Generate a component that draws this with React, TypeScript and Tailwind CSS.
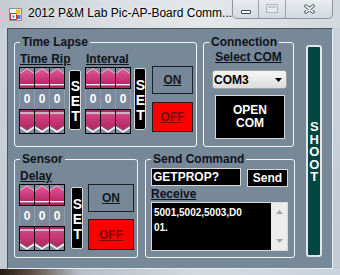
import React from 'react';

const label = 'text-[12px] leading-[14px] font-bold text-[#10131a]';

function Group({
  title,
  className,
  children,
}: {
  title: string;
  className: string;
  children: React.ReactNode;
}) {
  return (
    <fieldset className={`rounded-[3px] border border-[#f3f5f7] ${className}`}>
      <legend className={`ml-[5px] px-[2px] ${label}`}>{title}</legend>
      {children}
    </fieldset>
  );
}

function UpArrow() {
  return (
    <svg width="14" height="20" viewBox="0 0 14 20" className="block bg-[#7f8e9e]">
      <defs>
        <linearGradient id="pkUp" x1="0" y1="0" x2="0" y2="1">
          <stop offset="0" stopColor="#e35a98" />
          <stop offset="1" stopColor="#b8286a" />
        </linearGradient>
      </defs>
      <polygon points="0,5.5 7,0.5 14,5.5 14,16 0,16" fill="url(#pkUp)" />
      <polyline points="0,5.5 7,0.8 14,5.5" fill="none" stroke="#f4b0cc" strokeWidth="1" />
      <rect y="16" width="14" height="1.5" fill="#ffffff" />
      <rect y="17.5" width="14" height="2.5" fill="#b02864" />
    </svg>
  );
}

function DownArrow() {
  return (
    <svg width="14" height="23" viewBox="0 0 14 23" className="block bg-[#7f8e9e]">
      <defs>
        <linearGradient id="pkDown" x1="0" y1="0" x2="0" y2="1">
          <stop offset="0" stopColor="#d24484" />
          <stop offset="1" stopColor="#b0265f" />
        </linearGradient>
      </defs>
      <rect y="0" width="14" height="2.5" fill="#b02864" />
      <rect y="2.5" width="14" height="1.2" fill="#ffffff" />
      <polygon points="0,3.7 14,3.7 14,15.5 7,20 0,15.5" fill="url(#pkDown)" />
      <polyline points="0,17.3 7,21.8 14,17.3" fill="none" stroke="#ffffff" strokeWidth="1.4" />
    </svg>
  );
}

function Spinner() {
  return (
    <div className="flex w-[46px] flex-col">
      <div className="flex h-[22px] gap-px border border-black bg-black">
        <UpArrow />
        <UpArrow />
        <UpArrow />
      </div>
      <div className="flex h-[20px] gap-px bg-[#8f9cab] px-px">
        {[0, 1, 2].map((i) => (
          <div
            key={i}
            className="flex w-[14px] items-center justify-center bg-[#7b8a9a] text-[12px] font-bold text-white"
          >
            0
          </div>
        ))}
      </div>
      <div className="flex h-[25px] gap-px border border-black bg-black">
        <DownArrow />
        <DownArrow />
        <DownArrow />
      </div>
    </div>
  );
}

function SetButton({ className }: { className: string }) {
  return (
    <div
      className={`flex w-[12px] items-center justify-center rounded-[2px] border border-[#d8d8d8] bg-black text-[14px] font-bold text-white ${className}`}
    >
      <span className="[writing-mode:vertical-lr] [text-orientation:upright] tracking-[-1px]">SET</span>
    </div>
  );
}

function OnOff({ w, onH, offH, gap }: { w: string; onH: string; offH: string; gap: string }) {
  return (
    <>
      <div
        className={`flex items-center justify-center border border-[#1b1f26] bg-[#778899] text-[12px] font-bold text-[#141820] underline ${w} ${onH}`}
      >
        ON
      </div>
      <div
        className={`flex items-center justify-center border border-[#2a1a1a] bg-[#ff0000] text-[12px] font-bold text-[#7a0a0a] underline ${w} ${offH} ${gap}`}
      >
        OFF
      </div>
    </>
  );
}

export default function App() {
  return (
    <div className="flex h-[275px] w-[340px] flex-col overflow-hidden bg-[linear-gradient(to_bottom,#cdd3da,#c3cad2)] font-['Liberation_Sans',Arial,sans-serif]">
      {/* title bar */}
      <div className="flex h-[28px] items-start bg-[linear-gradient(to_right,#c5cbd2,#d9dde2_30%,#e4e7ea_60%,#d3d8de)]">
        <svg width="13" height="13" viewBox="0 0 13 13" className="ml-[9px] mt-[8px] shrink-0">
          <rect x="0.5" y="0.5" width="12" height="12" fill="#f4f4f4" stroke="#8090a8" />
          <rect x="1.5" y="5.5" width="6" height="6" fill="#ffffff" stroke="#d83030" />
          <rect x="3.5" y="7.5" width="2" height="2" fill="#2f6fd0" />
          <rect x="7" y="1.5" width="4.5" height="4.5" fill="#f2c21c" />
          <rect x="8" y="7" width="3.5" height="4" fill="#3c78d8" />
        </svg>
        <div className="ml-[6px] mt-[6px] whitespace-nowrap text-[12px] leading-[15px] text-black [text-shadow:0_0_5px_rgba(255,255,255,0.95)]">
          2012 P&amp;M Lab Pic-AP-Board Comm...
        </div>
        <div className="ml-auto mr-[7px] flex h-[19px] shrink-0 rounded-b-[5px] border border-t-0 border-[#8c96a2] bg-[linear-gradient(to_bottom,#e9ecef,#d3d9df)]">
          <div className="flex w-[26px] items-end justify-center border-r border-[#9aa4ae] pb-[4px]">
            <div className="h-[4px] w-[10px] rounded-[1px] border border-[#3e4650] bg-white" />
          </div>
          <div className="flex w-[27px] items-start justify-center border-r border-[#9aa4ae] pt-[4px]">
            <div className="h-[9px] w-[12px] border border-[#aeb6c0] bg-[#e6eaee] p-[1px]">
              <div className="h-full w-full border-t-2 border-[#c2c9d1]" />
            </div>
          </div>
          <div className="flex w-[46px] items-center justify-center pb-[1px]">
            <svg width="11" height="10" viewBox="0 0 11 10">
              <path d="M2 2 L9 8 M9 2 L2 8" stroke="#3c4550" strokeWidth="3.4" strokeLinecap="round" />
              <path d="M2 2 L9 8 M9 2 L2 8" stroke="#f4f6f8" strokeWidth="1.7" strokeLinecap="round" />
            </svg>
          </div>
        </div>
      </div>

      {/* client area */}
      <div className="ml-[7px] h-[241px] w-[326px] border border-t-[#49545f] border-l-[#49545f] border-r-[#e6ecf2] border-b-[#e6ecf2] bg-[#778899]">
        <div className="flex items-start">
          <div className="flex w-[287px] flex-col pl-[6px] pt-[6px]">
            <div className="flex gap-[6px]">
              <Group title="Time Lapse" className="h-[112px] w-[183px]">
                <div className="flex items-start">
                  <div className="ml-[4px] flex w-[46px] flex-col">
                    <div className={`mt-[3px] whitespace-nowrap pl-[1px] underline ${label}`}>Time Rip</div>
                    <div className="mt-[1px]">
                      <Spinner />
                    </div>
                  </div>
                  <SetButton className="ml-[4px] mt-[21px] h-[60px]" />
                  <div className="ml-[4px] flex w-[46px] flex-col">
                    <div className={`mt-[3px] whitespace-nowrap pl-[1px] underline ${label}`}>Interval</div>
                    <div className="mt-[1px]">
                      <Spinner />
                    </div>
                  </div>
                  <SetButton className="ml-[3px] mt-[19px] h-[62px]" />
                  <div className="ml-[6px] mt-[17px] flex flex-col">
                    <OnOff w="w-[41px]" onH="h-[28px]" offH="h-[30px]" gap="mt-[8px]" />
                  </div>
                </div>
              </Group>

              <Group title="Connection" className="h-[112px] w-[91px]">
                <div className="flex flex-col">
                  <div className={`mt-[1px] text-center underline ${label}`}>Select COM</div>
                  <div className="ml-[8px] mt-[6px] flex h-[19px] w-[75px] items-center rounded-[3px] border border-[#9c9c9c] bg-[linear-gradient(to_bottom,#f7f7f7,#dcdcdc)] pl-[1px]">
                    <span className="text-[12px] leading-[14px] font-bold text-black">COM3</span>
                    <svg width="7" height="4" viewBox="0 0 7 4" className="ml-auto mr-[4px]">
                      <polygon points="0,0 7,0 3.5,4" fill="#000" />
                    </svg>
                  </div>
                  <div className="ml-[11px] mt-[6px] flex h-[44px] w-[70px] flex-col items-center justify-center border border-[#d6d6d6] bg-black text-[12px] leading-[13px] font-bold text-white">
                    <span>OPEN</span>
                    <span>COM</span>
                  </div>
                </div>
              </Group>
            </div>

            <div className="mt-[5px] flex gap-[7px]">
              <Group title="Sensor" className="h-[106px] w-[124px]">
                <div className="flex items-start">
                  <div className="ml-[4px] flex w-[46px] flex-col">
                    <div className={`mt-[3px] pl-[1px] underline ${label}`}>Delay</div>
                    <div className="mt-[1px]">
                      <Spinner />
                    </div>
                  </div>
                  <SetButton className="ml-[6px] mt-[21px] h-[62px]" />
                  <div className="ml-[5px] mt-[18px] flex flex-col">
                    <OnOff w="w-[46px]" onH="h-[28px]" offH="h-[31px]" gap="mt-[7px]" />
                  </div>
                </div>
              </Group>

              <Group title="Send Command" className="h-[106px] w-[150px]">
                <div className="flex items-start pl-[5px] pt-[2px]">
                  <div className="flex h-[18px] w-[90px] items-center border border-[#d8d8d8] bg-black pl-[1px] text-[12px] font-bold text-white">
                    GETPROP?
                  </div>
                  <div className="ml-[6px] mt-[1px] flex h-[18px] w-[41px] items-center justify-center border border-[#d8d8d8] bg-black text-[12px] font-bold text-white">
                    Send
                  </div>
                </div>
                <div className={`ml-[5px] underline ${label}`}>Receive</div>
                <div className="ml-[5px] mt-[1px] flex h-[49px] w-[137px] border border-[#d8d8d8] bg-black">
                  <div className="flex-1 pl-[2px] pt-[2px] text-[10px] leading-[15px] font-bold text-white">
                    <div>5001,5002,5003,D0</div>
                    <div>01.</div>
                  </div>
                  <div className="flex w-[16px] flex-col items-center justify-between bg-[#ececec] py-[7px]">
                    <svg width="7" height="4" viewBox="0 0 7 4">
                      <polygon points="0,4 7,4 3.5,0" fill="#a4a4a4" />
                    </svg>
                    <svg width="7" height="4" viewBox="0 0 7 4">
                      <polygon points="0,0 7,0 3.5,4" fill="#a4a4a4" />
                    </svg>
                  </div>
                </div>
              </Group>
            </div>
          </div>

          <div className="ml-[11px] mt-[16px] flex h-[212px] w-[16px] items-center justify-center rounded-[3px] border-2 border-[#e2e6e9] bg-[#024644] text-[13px] font-bold text-white">
            <span className="[writing-mode:vertical-lr] [text-orientation:upright] tracking-[-2.4px]">SHOOT</span>
          </div>
        </div>
      </div>

      {/* bottom frame */}
      <div className="h-[6px] bg-[linear-gradient(to_right,#241a14,#5c4c42_30px,#b8bec6_80px,#d5dae0_200px,#c9d2dc)]" />
    </div>
  );
}
